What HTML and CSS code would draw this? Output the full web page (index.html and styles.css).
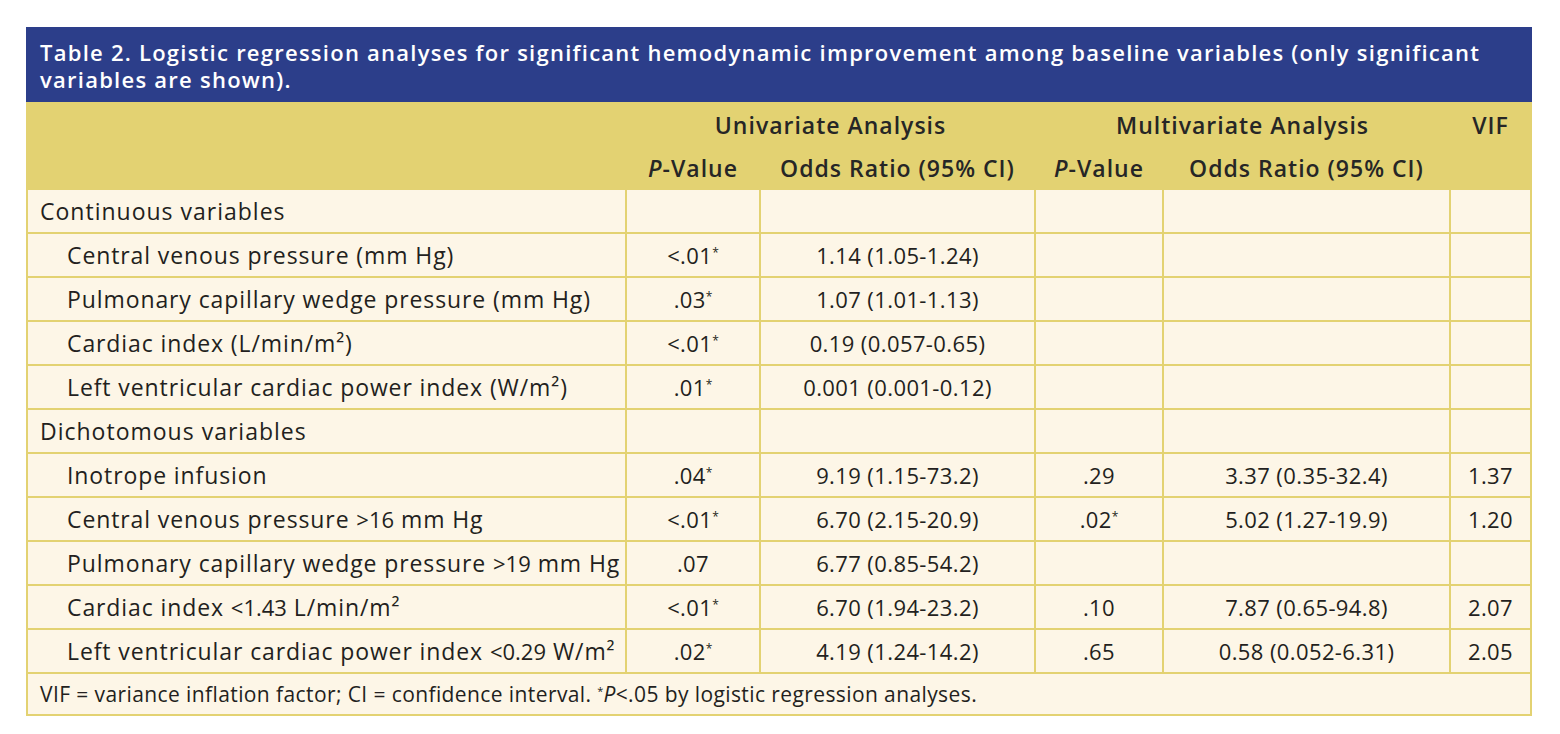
FILE: index.html
```html
<!DOCTYPE html>
<html lang="en">
<head>
<meta charset="utf-8">
<title>Table 2</title>
<link rel="stylesheet" href="styles.css">
</head>
<body>
<div class="wrap">
  <div class="title">Table 2. Logistic regression analyses for significant hemodynamic improvement among baseline variables (only significant variables are shown).</div>
  <table class="tbl">
    <colgroup>
      <col class="c1"><col class="c2"><col class="c3"><col class="c4"><col class="c5"><col class="c6">
    </colgroup>
    <thead>
      <tr class="h">
        <th></th>
        <th colspan="2">Univariate Analysis</th>
        <th colspan="2">Multivariate Analysis</th>
        <th>VIF</th>
      </tr>
      <tr class="h">
        <th></th>
        <th><i>P</i>-Value</th>
        <th>Odds Ratio (95% CI)</th>
        <th><i>P</i>-Value</th>
        <th>Odds Ratio (95% CI)</th>
        <th></th>
      </tr>
    </thead>
    <tbody>
      <tr><td class="grp">Continuous variables</td><td></td><td></td><td></td><td></td><td></td></tr>
      <tr><td class="lbl">Central venous pressure (mm Hg)</td><td>&lt;.01<sup>*</sup></td><td>1.14 (1.05-1.24)</td><td></td><td></td><td></td></tr>
      <tr><td class="lbl">Pulmonary capillary wedge pressure (mm Hg)</td><td>.03<sup>*</sup></td><td>1.07 (1.01-1.13)</td><td></td><td></td><td></td></tr>
      <tr><td class="lbl">Cardiac index (L/min/m²)</td><td>&lt;.01<sup>*</sup></td><td>0.19 (0.057-0.65)</td><td></td><td></td><td></td></tr>
      <tr><td class="lbl">Left ventricular cardiac power index (W/m²)</td><td>.01<sup>*</sup></td><td>0.001 (0.001-0.12)</td><td></td><td></td><td></td></tr>
      <tr><td class="grp">Dichotomous variables</td><td></td><td></td><td></td><td></td><td></td></tr>
      <tr><td class="lbl">Inotrope infusion</td><td>.04<sup>*</sup></td><td>9.19 (1.15-73.2)</td><td>.29</td><td>3.37 (0.35-32.4)</td><td>1.37</td></tr>
      <tr><td class="lbl">Central venous pressure <span class="num">&gt;16</span> mm Hg</td><td>&lt;.01<sup>*</sup></td><td>6.70 (2.15-20.9)</td><td>.02<sup>*</sup></td><td>5.02 (1.27-19.9)</td><td>1.20</td></tr>
      <tr><td class="lbl">Pulmonary capillary wedge pressure <span class="num">&gt;19</span> mm Hg</td><td>.07</td><td>6.77 (0.85-54.2)</td><td></td><td></td><td></td></tr>
      <tr><td class="lbl">Cardiac index <span class="num">&lt;1.43</span> L/min/m²</td><td>&lt;.01<sup>*</sup></td><td>6.70 (1.94-23.2)</td><td>.10</td><td>7.87 (0.65-94.8)</td><td>2.07</td></tr>
      <tr><td class="lbl">Left ventricular cardiac power index <span class="num">&lt;0.29</span> W/m²</td><td>.02<sup>*</sup></td><td>4.19 (1.24-14.2)</td><td>.65</td><td>0.58 (0.052-6.31)</td><td>2.05</td></tr>
      <tr class="foot"><td colspan="6">VIF = variance inflation factor; CI = confidence interval. <sup>*</sup><i>P</i>&lt;.05 by logistic regression analyses.</td></tr>
    </tbody>
  </table>
</div>
</body>
</html>
```
FILE: styles.css
```css
html, body {
  margin: 0;
  padding: 0;
  background: #ffffff;
}
body {
  font-family: "Open Sans", "Liberation Sans", sans-serif;
  color: #231f20;
}
.wrap {
  padding: 27px 0 0 26px;
  width: 1506px;
}
.title {
  background: #2c3e8a;
  color: #ffffff;
  font-weight: 600;
  font-size: 22px;
  letter-spacing: 1.25px;
  line-height: 27px;
  padding: 12px 14px 9px 14px;
}
.tbl {
  width: 1506px;
  table-layout: fixed;
  border-collapse: separate;
  border-spacing: 2px;
  background: #e3d272;
  font-size: 22px;
  letter-spacing: 0.4px;
}
.c1 { width: 597px; }
.c2 { width: 132px; }
.c3 { width: 273px; }
.c4 { width: 126px; }
.c5 { width: 285px; }
.c6 { width: 79px; }
.tbl th {
  height: 41px;
  padding: 0;
  font-weight: 600;
  font-size: 23px;
  letter-spacing: 1px;
  text-align: center;
  vertical-align: middle;
  color: #262626;
  white-space: nowrap;
}
.tbl td {
  height: 42px;
  padding: 0;
  background: #fdf6e7;
  text-align: center;
  vertical-align: middle;
  white-space: nowrap;
}
.tbl td.grp {
  text-align: left;
  padding-left: 12px;
  font-size: 23px;
  letter-spacing: 1px;
}
.tbl td.lbl {
  text-align: left;
  padding-left: 39px;
  font-size: 23px;
  letter-spacing: 0.9px;
}
.tbl td.lbl .num {
  font-size: 22px;
  letter-spacing: 0;
}
.tbl sup {
  font-size: 12px;
  line-height: 0;
  vertical-align: 7px;
  letter-spacing: 0;
}
.tbl .foot td {
  height: 40px;
  text-align: left;
  padding-left: 12px;
  font-size: 21px;
  letter-spacing: 0.4px;
}
.tbl .foot sup {
  font-size: 11px;
}
```
